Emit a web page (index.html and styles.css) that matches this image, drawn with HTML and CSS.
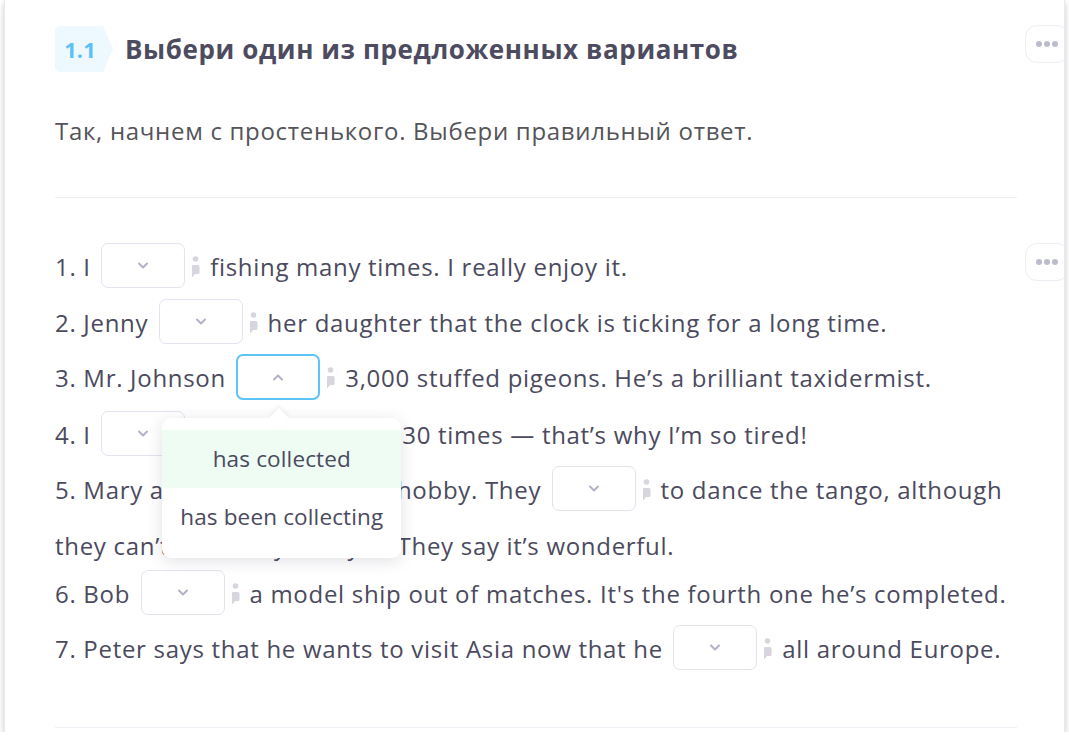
FILE: index.html
```html
<!DOCTYPE html>
<html lang="ru">
<head>
<meta charset="utf-8">
<title>Упражнение 1.1</title>
<link rel="stylesheet" href="styles.css">
</head>
<body>
<div class="card">
  <button class="more more-head" aria-label="Ещё"><i></i><i></i><i></i></button>
  <button class="more more-task" aria-label="Ещё"><i></i><i></i><i></i></button>

  <div class="header">
    <span class="badge">1.1</span>
    <h1 class="title">Выбери один из предложенных вариантов</h1>
  </div>

  <p class="intro">Так, начнем с простенького. Выбери правильный ответ.</p>

  <hr class="sep">

  <div class="task">
    <div class="item">1. I <span class="select"><svg class="chev" width="14" height="9" viewBox="0 0 14 9"><path d="M3 2.5l4 4 4-4"/></svg></span><span class="hint"><svg width="9" height="23" viewBox="0 0 9 23"><circle cx="4.5" cy="3" r="2.8"/><path d="M2.2 9H7A1.5 1.5 0 0 1 8.5 10.5V16.5A1.5 1.5 0 0 1 7 18H4.2L1 21.6V10.2A1.2 1.2 0 0 1 2.2 9Z"/></svg></span> fishing many times. I really enjoy it.</div>

    <div class="item">2. Jenny <span class="select"><svg class="chev" width="14" height="9" viewBox="0 0 14 9"><path d="M3 2.5l4 4 4-4"/></svg></span><span class="hint"><svg width="9" height="23" viewBox="0 0 9 23"><circle cx="4.5" cy="3" r="2.8"/><path d="M2.2 9H7A1.5 1.5 0 0 1 8.5 10.5V16.5A1.5 1.5 0 0 1 7 18H4.2L1 21.6V10.2A1.2 1.2 0 0 1 2.2 9Z"/></svg></span> her daughter that the clock is ticking for a long time.</div>

    <div class="item">3. Mr. Johnson <span class="select is-open"><svg class="chev" width="14" height="9" viewBox="0 0 14 9"><path d="M3 6.5l4-4 4 4"/></svg><span class="menu"><span class="option is-hover">has collected</span><span class="option">has been collecting</span></span></span><span class="hint"><svg width="9" height="23" viewBox="0 0 9 23"><circle cx="4.5" cy="3" r="2.8"/><path d="M2.2 9H7A1.5 1.5 0 0 1 8.5 10.5V16.5A1.5 1.5 0 0 1 7 18H4.2L1 21.6V10.2A1.2 1.2 0 0 1 2.2 9Z"/></svg></span> 3,000 stuffed pigeons. He’s a brilliant taxidermist.</div>

    <div class="item">4. I <span class="select"><svg class="chev" width="14" height="9" viewBox="0 0 14 9"><path d="M3 2.5l4 4 4-4"/></svg></span><span class="hint"><svg width="9" height="23" viewBox="0 0 9 23"><circle cx="4.5" cy="3" r="2.8"/><path d="M2.2 9H7A1.5 1.5 0 0 1 8.5 10.5V16.5A1.5 1.5 0 0 1 7 18H4.2L1 21.6V10.2A1.2 1.2 0 0 1 2.2 9Z"/></svg></span> ran to the store 30 times — that’s why I’m so tired!</div>

    <div class="item">5. Mary and Ned have a new hobby. They <span class="select"><svg class="chev" width="14" height="9" viewBox="0 0 14 9"><path d="M3 2.5l4 4 4-4"/></svg></span><span class="hint"><svg width="9" height="23" viewBox="0 0 9 23"><circle cx="4.5" cy="3" r="2.8"/><path d="M2.2 9H7A1.5 1.5 0 0 1 8.5 10.5V16.5A1.5 1.5 0 0 1 7 18H4.2L1 21.6V10.2A1.2 1.2 0 0 1 2.2 9Z"/></svg></span> to dance the tango, although they can’t do it very well yet. They say it’s wonderful.</div>

    <div class="item">6. Bob <span class="select"><svg class="chev" width="14" height="9" viewBox="0 0 14 9"><path d="M3 2.5l4 4 4-4"/></svg></span><span class="hint"><svg width="9" height="23" viewBox="0 0 9 23"><circle cx="4.5" cy="3" r="2.8"/><path d="M2.2 9H7A1.5 1.5 0 0 1 8.5 10.5V16.5A1.5 1.5 0 0 1 7 18H4.2L1 21.6V10.2A1.2 1.2 0 0 1 2.2 9Z"/></svg></span> a model ship out of matches. It's the fourth one he’s completed.</div>

    <div class="item">7. Peter says that he wants to visit Asia now that he <span class="select"><svg class="chev" width="14" height="9" viewBox="0 0 14 9"><path d="M3 2.5l4 4 4-4"/></svg></span><span class="hint"><svg width="9" height="23" viewBox="0 0 9 23"><circle cx="4.5" cy="3" r="2.8"/><path d="M2.2 9H7A1.5 1.5 0 0 1 8.5 10.5V16.5A1.5 1.5 0 0 1 7 18H4.2L1 21.6V10.2A1.2 1.2 0 0 1 2.2 9Z"/></svg></span> all around Europe.</div>
  </div>

  <hr class="sep sep-bottom">
</div>
</body>
</html>
```

FILE: styles.css
```css
* { box-sizing: border-box; }

html, body {
  margin: 0;
  padding: 0;
  background: #ffffff;
}

body {
  font-family: "Open Sans", "Noto Sans", "Liberation Sans", sans-serif;
  color: #4b4a5e;
  overflow: hidden;
}

.card {
  position: relative;
  margin-left: 4px;
  width: 1061px;
  padding: 26px 47px 4px 50px;
  background: #ffffff;
  border-left: 1px solid #e9e9f2;
  border-right: 1px solid #e9e9f2;
  box-shadow: 0 3px 6px rgba(0, 0, 0, 0.22);
  overflow: hidden;
}

/* "more" buttons sitting on the right edge */
.more {
  position: absolute;
  right: -5px;
  width: 44px;
  height: 38px;
  padding: 0;
  border: 1px solid #ededf3;
  border-radius: 12px;
  background: #ffffff;
  display: flex;
  align-items: center;
  justify-content: center;
  gap: 2px;
}
.more i {
  display: block;
  width: 6px;
  height: 6px;
  border-radius: 50%;
  background: #bdbbd0;
}
.more-head { top: 25px; }
.more-task { top: 243px; }

/* header */
.header {
  display: flex;
  align-items: center;
  gap: 12px;
  height: 46px;
}
.badge {
  position: relative;
  width: 48px;
  height: 46px;
  margin-right: 10px;
  border-radius: 5px 0 0 5px;
  background: #eef8ff;
  color: #5cc1f7;
  font-weight: 700;
  font-size: 22px;
  line-height: 46px;
  text-align: center;
  padding-left: 2px;
}
.badge::after {
  content: "";
  position: absolute;
  left: 100%;
  top: 0;
  border-left: 10px solid #eef8ff;
  border-top: 23px solid transparent;
  border-bottom: 23px solid transparent;
}
.title {
  margin: 0;
  font-size: 26px;
  font-weight: 700;
  letter-spacing: 0.6px;
  color: #4d4b60;
}

.intro {
  margin: 42px 0 0;
  font-size: 24px;
  letter-spacing: 0.7px;
  line-height: 33px;
  color: #555458;
}

.sep {
  margin: 50px 0 0;
  border: 0;
  height: 1px;
  background: #eeeef4;
}
.sep-bottom {
  margin-top: 46px;
}

/* exercise */
.task {
  padding-top: 45px;
  margin-right: -8px;
}
.item {
  font-size: 24px;
  letter-spacing: 0.7px;
  line-height: 48px;
  color: #4b4a5e;
}

.select {
  position: relative;
  display: inline-flex;
  align-items: center;
  justify-content: center;
  vertical-align: top;
  width: 84px;
  height: 45px;
  margin: 0 0 10.5px 3.5px;
  border: 1.5px solid #e4e2ef;
  border-radius: 7px;
  background: #ffffff;
  letter-spacing: 0;
}
.chev path {
  fill: none;
  stroke: #b3b1c8;
  stroke-width: 2;
  stroke-linecap: round;
  stroke-linejoin: round;
}
.select.is-open {
  height: 46px;
  border: 2px solid #5ec4f8;
}

.hint {
  display: inline-block;
  margin: 0 3px 0 6px;
  vertical-align: -3px;
  line-height: 0;
}
.hint svg { fill: #d6d6de; }

/* dropdown */
.menu {
  position: absolute;
  z-index: 10;
  top: calc(100% + 20px);
  left: 50%;
  width: 239px;
  margin-left: -116px;
  padding: 12px 0;
  background: #ffffff;
  border-radius: 9px;
  box-shadow: 0 3px 16px rgba(40, 40, 70, 0.14);
  display: flex;
  flex-direction: column;
}
.menu::before {
  content: "";
  position: absolute;
  top: -7px;
  left: 50%;
  width: 14px;
  height: 14px;
  margin-left: -10px;
  background: #ffffff;
  transform: rotate(45deg);
  box-shadow: -2px -2px 4px rgba(40, 40, 70, 0.06);
}
.option {
  position: relative;
  display: block;
  height: 58px;
  line-height: 58px;
  font-size: 22.5px;
  letter-spacing: 0.15px;
  text-align: center;
  color: #4b4a5e;
  white-space: nowrap;
}
.option.is-hover {
  background: #eefcf4;
}
```
